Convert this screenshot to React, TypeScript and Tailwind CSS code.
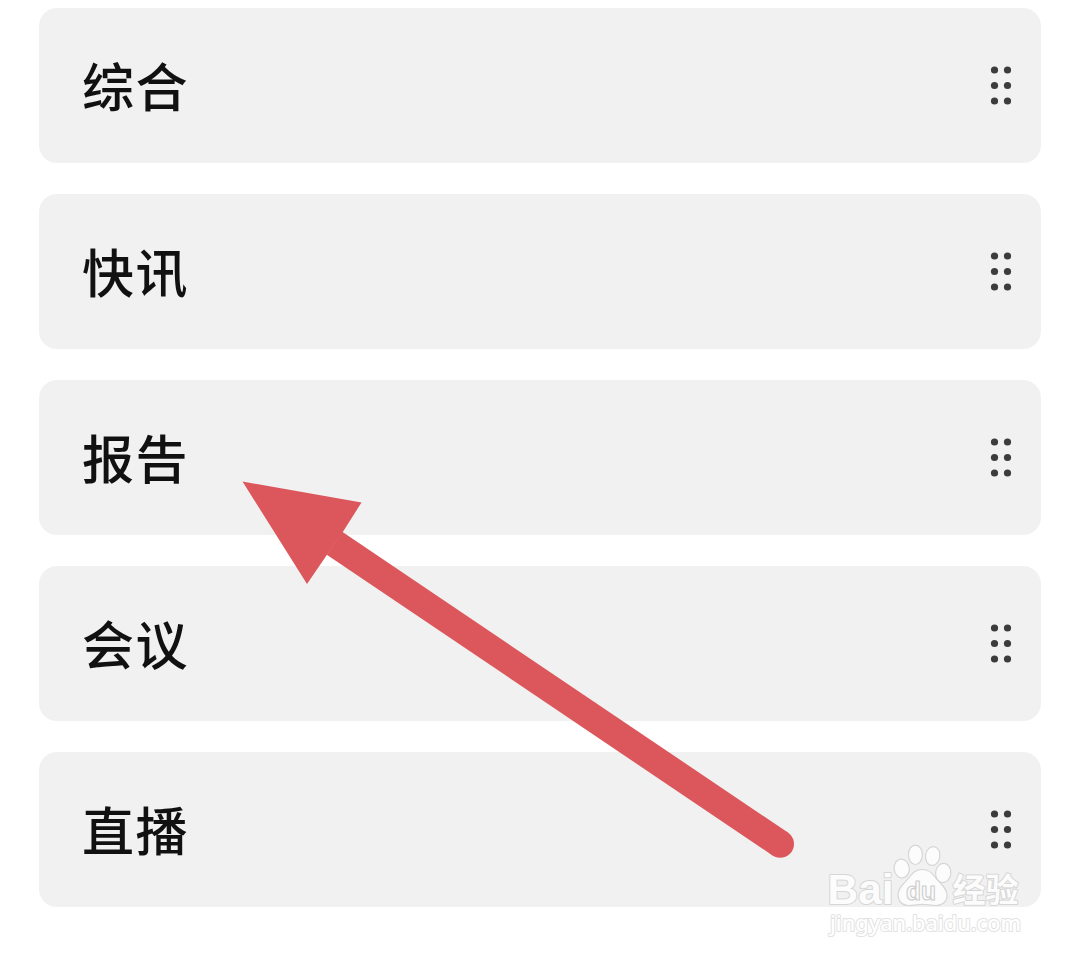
const channels = ["综合", "快讯", "报告", "会议", "直播"];

function DragHandle() {
  return (
    <svg width="24" height="42" viewBox="0 0 24 42" fill="#3c3c3c" className="shrink-0">
      {[5, 20.5, 36].map((y) => (
        <g key={y}>
          <circle cx="5.5" cy={y} r="3.6" />
          <circle cx="18.5" cy={y} r="3.6" />
        </g>
      ))}
    </svg>
  );
}

function Arrow() {
  return (
    <svg
      className="pointer-events-none absolute left-0 top-0"
      width="1080"
      height="960"
      viewBox="0 0 1080 960"
      fill="#dc575c"
    >
      <path d="M242.5 481.5 361.5 502.5 342.8 532 326.8 555 307 584Z" />
      <path d="M334.5 543.3 780.2 844" stroke="#dc575c" strokeWidth="27.6" />
      <circle cx="780.2" cy="844" r="13.8" />
    </svg>
  );
}

function Watermark() {
  return (
    <svg
      className="pointer-events-none absolute left-[810px] top-[836px]"
      width="230"
      height="120"
      viewBox="810 836 230 120"
      fill="#fcfcfc"
      stroke="#d6d6d6"
      strokeWidth="2"
      strokeLinejoin="round"
    >
      <text
        x="827.5"
        y="903.5"
        textLength="66"
        lengthAdjust="spacingAndGlyphs"
        paintOrder="stroke"
        className="font-['Liberation_Sans',sans-serif] text-[43px] font-bold"
      >
        Bai
      </text>
      <g strokeWidth="1.2">
        <ellipse cx="901.7" cy="868.5" rx="7.6" ry="9.5" transform="rotate(-8 901.7 868.5)" />
        <ellipse cx="915.4" cy="854.8" rx="7" ry="9.7" />
        <ellipse cx="932.7" cy="856" rx="7.2" ry="9.5" transform="rotate(8 932.7 856)" />
        <ellipse cx="943.2" cy="873" rx="7.6" ry="9.7" transform="rotate(6 943.2 873)" />
        <path d="M922.5 869.5C929 869.5 932 872.5 935 877C939 883 947 887 947 895.5C947 902 942 905.5 936 905.5C931 905.5 927 904.3 922.5 904.3C918 904.3 914 905.5 909 905.5C902 905.5 898 901 898 895C898 887 905 883 909.5 877C913 872.5 916 869.5 922.5 869.5Z" />
      </g>
      <text
        x="906"
        y="899.5"
        textLength="30"
        lengthAdjust="spacingAndGlyphs"
        strokeWidth="1.2"
        stroke="#cecece"
        className="font-['Liberation_Sans',sans-serif] text-[26px] font-bold"
      >
        du
      </text>
      <text
        x="952.5"
        y="901.5"
        textLength="66"
        lengthAdjust="spacingAndGlyphs"
        paintOrder="stroke"
        className="font-['Noto_Sans_CJK_SC',sans-serif] text-[33px] font-bold"
      >
        经验
      </text>
      <text
        x="830"
        y="930.5"
        textLength="191"
        lengthAdjust="spacingAndGlyphs"
        paintOrder="stroke"
        stroke="#e2e2e2"
        fill="#ffffff"
        className="font-['Noto_Sans',sans-serif] text-[22px] font-medium"
      >
        jingyan.baidu.com
      </text>
    </svg>
  );
}

export default function App() {
  return (
    <div className="relative h-[960px] w-[1080px] overflow-hidden bg-white font-['Noto_Sans_CJK_SC',sans-serif]">
      <ul className="flex flex-col gap-[31px] px-[39px] pt-2">
        {channels.map((name) => (
          <li
            key={name}
            className="flex h-[155px] items-center justify-between rounded-[18px] bg-[#f1f1f1] pl-[43px] pr-[28px]"
          >
            <span className="pb-[2px] text-[52px] leading-[78px] font-medium tracking-[1.5px] text-[#111111]">
              {name}
            </span>
            <DragHandle />
          </li>
        ))}
      </ul>
      <Arrow />
      <Watermark />
    </div>
  );
}
